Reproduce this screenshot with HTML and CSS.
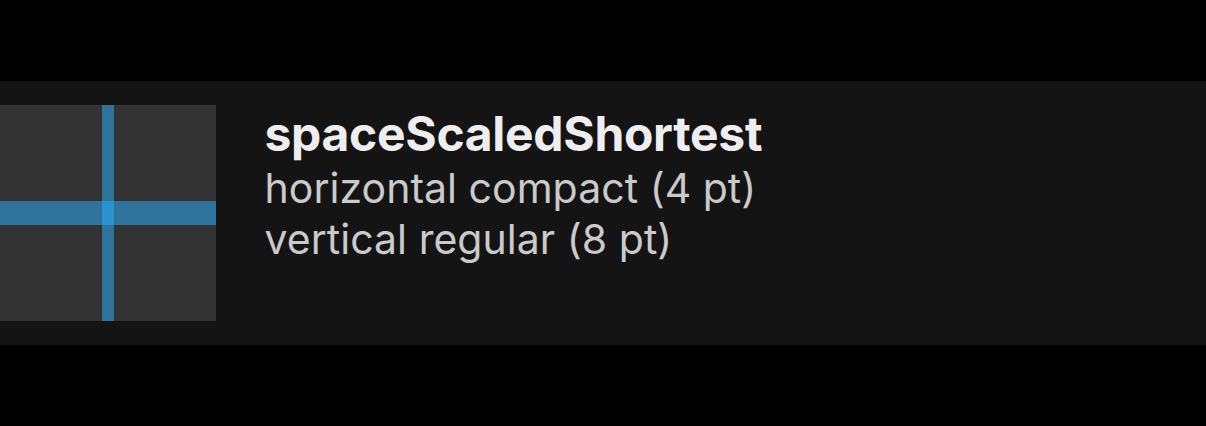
FILE: index.html
```html
<!DOCTYPE html>
<html lang="en">
<head>
<meta charset="utf-8">
<title>Spacing</title>
<link rel="stylesheet" href="styles.css">
</head>
<body>
<main class="row">
  <div class="preview">
    <div class="bar-v"></div>
    <div class="bar-h"></div>
    <div class="bar-cross"></div>
  </div>
  <div class="details">
    <h1 class="name">spaceScaledShortest</h1>
    <p class="line">horizontal compact (4 pt)</p>
    <p class="line">vertical regular (8 pt)</p>
  </div>
</main>
</body>
</html>
```
FILE: styles.css
```css
* { box-sizing: border-box; }
body {
  margin: 0;
  padding-top: 81px;
  height: 426px;
  overflow: hidden;
  background: #000;
  font-family: Inter, "Liberation Sans", sans-serif;
}
.row {
  display: flex;
  gap: 48.5px;
  height: 264px;
  padding: 24px 0;
  background: #141414;
}
.preview {
  display: grid;
  grid-template-columns: 102px 12px 102px;
  grid-template-rows: 96px 24px 96px;
  width: 216px;
  height: 216px;
  background: #333;
}
.bar-v { grid-area: 1 / 2 / 4 / 3; background: #2d739b; }
.bar-h { grid-area: 2 / 1 / 3 / 4; background: #2d739b; }
.bar-cross { grid-area: 2 / 2 / 3 / 3; background: #2a93cf; }
.details { white-space: nowrap; }
.name {
  margin: 0 0 1px;
  font-size: 48px;
  font-weight: 700;
  line-height: 57px;
  letter-spacing: -0.31px;
  color: #eee;
}
.line {
  margin: 0;
  font-size: 41px;
  font-weight: 400;
  line-height: 51px;
  letter-spacing: 0.03px;
  color: #cacaca;
}
```
